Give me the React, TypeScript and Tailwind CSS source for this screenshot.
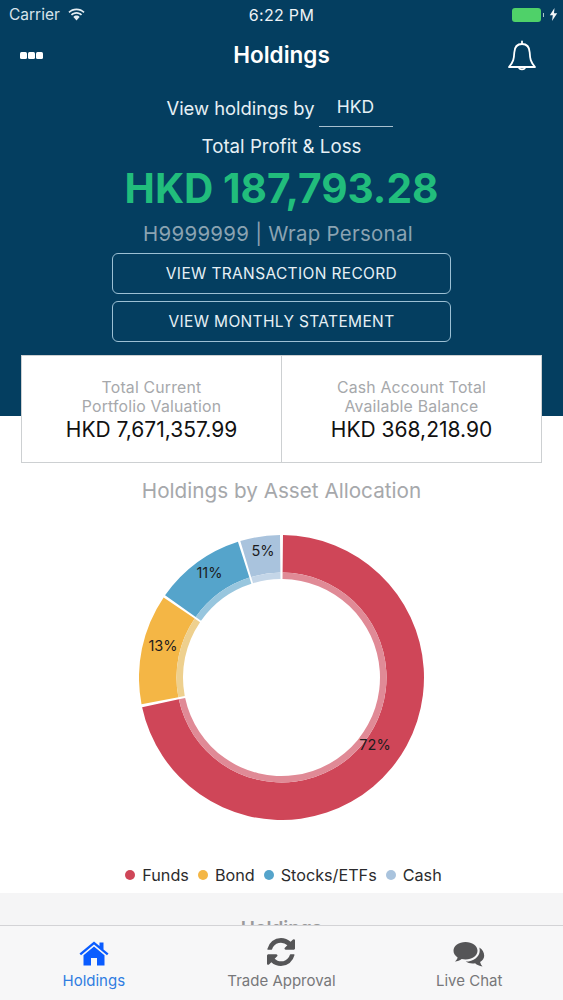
import React from "react";

const C = 281.5, CY = 677.5;
function pt(r: number, a: number): string {
  const t = (a * Math.PI) / 180;
  return `${(C - 139 + r * Math.sin(t)).toFixed(2)} ${(CY - 535 - r * Math.cos(t)).toFixed(2)}`;
}
function arc(r0: number, r1: number, a0: number, a1: number): string {
  const large = a1 - a0 > 180 ? 1 : 0;
  return `M${pt(r1, a0)}A${r1} ${r1} 0 ${large} 1 ${pt(r1, a1)}L${pt(r0, a1)}A${r0} ${r0} 0 ${large} 0 ${pt(r0, a0)}Z`;
}
const segs = [
  { a0: 0.6, a1: 258, main: "#cf4658", soft: "#e08a96" },
  { a0: 259.2, a1: 304.2, main: "#f4b645", soft: "#eed08e" },
  { a0: 305.2, a1: 342.2, main: "#55a4cb", soft: "#98c6de" },
  { a0: 343.2, a1: 359.4, main: "#a9c3dd", soft: "#c4d6e8" },
];

function Donut() {
  return (
    <svg width="285" height="285" viewBox="0 0 285 285" className="block">
      {segs.map((s) => (
        <g key={s.main}>
          <path d={arc(105, 142.5, s.a0, s.a1)} fill={s.main} />
          <path d={arc(98.5, 105, s.a0, s.a1)} fill={s.soft} />
        </g>
      ))}
      <g fontSize="14.5" fill="#1c1c1e" textAnchor="middle" fontFamily="Inter, sans-serif">
        <text x="236" y="215">72%</text>
        <text x="24" y="116">13%</text>
        <text x="70.500" y="42.500">11%</text>
        <text x="124" y="21">5%</text>
      </g>
    </svg>
  );
}

function Legend({ color, label }: { color: string; label: string }) {
  return (
    <div className="flex items-center gap-[7px]">
      <span className="w-[10px] h-[10px] rounded-full" style={{ backgroundColor: color }} />
      <span>{label}</span>
    </div>
  );
}

function Stat({ l1, l2, v }: { l1: string; l2: string; v: string }) {
  return (
    <div className="flex-1 flex flex-col items-center pt-[22px]">
      <div className="text-[15.800px] leading-[19px] text-[#a6a8ab] tracking-[0.2px]">{l1}</div>
      <div className="text-[15.800px] leading-[19px] text-[#a6a8ab] tracking-[0.2px]">{l2}</div>
      <div className="text-[21px] leading-[25px] text-[#111] mt-[1px]">{v}</div>
    </div>
  );
}

function Btn({ children }: { children: string }) {
  return (
    <div className="w-[339px] h-[41px] pt-[1px] rounded-[6px] border border-[#9cc0d4] flex items-center justify-center text-[15.5px] text-[#e6f0f5] tracking-[0.35px]">
      {children}
    </div>
  );
}

export default function App() {
  return (
    <div className="w-[563px] h-[1000px] overflow-hidden bg-white flex flex-col font-['Inter','Liberation_Sans',sans-serif]">
      <div className="h-[416px] shrink-0 bg-[#043e60] flex flex-col items-center text-white">
        <div className="w-full h-[29px] flex items-center justify-between pl-[9px] pr-[5px] relative">
          <div className="flex items-center gap-[8px] text-[15.500px] text-[#d7e3ea]">
            <span>Carrier</span>
            <svg width="17" height="13" viewBox="0 0 17 13" fill="#e4edf2">
              <path d="M8.5 0.500C5.300 0.500 2.500 1.700 0.400 3.800L1.600 5C3.400 3.200 5.800 2.200 8.500 2.200S13.600 3.200 15.400 5L16.600 3.800C14.500 1.700 11.700 0.500 8.500 0.500Z" />
              <path d="M8.500 4.100C6.300 4.100 4.400 5 2.900 6.400L4.100 7.600C5.300 6.500 6.800 5.800 8.500 5.800S11.700 6.500 12.900 7.600L14.100 6.400C12.600 5 10.700 4.100 8.500 4.100Z" />
              <path d="M8.500 7.600C7.300 7.600 6.200 8.100 5.400 8.900L8.500 12.400L11.600 8.900C10.800 8.100 9.700 7.600 8.500 7.600Z" />
            </svg>
          </div>
          <div className="absolute left-0 right-0 text-center text-[16px] text-[#eef3f6] tracking-[0.3px]">6:22 PM</div>
          <div className="flex items-center gap-[2px]">
            <div className="w-[29px] h-[14px] rounded-[3px] bg-[#4fd169]" />
            <div className="w-[1px] h-[4px] bg-[#a9c4c9]" />
            <svg width="9" height="13" viewBox="0 0 9 13" fill="#f2f6f8" className="ml-[3px]">
              <path d="M5.500 0L0.800 7.300H3.800L3 13L8.200 5.300H5L5.500 0Z" />
            </svg>
          </div>
        </div>
        <div className="w-full h-[52px] flex items-center justify-between pl-[20px] pr-[26px] relative">
          <div className="flex gap-[1px]">
            <span className="w-[7px] h-[7px] rounded-[1.500px] bg-white" />
            <span className="w-[7px] h-[7px] rounded-[1.500px] bg-white" />
            <span className="w-[7px] h-[7px] rounded-[1.500px] bg-white" />
          </div>
          <div className="absolute left-0 right-0 text-center text-[22.500px] font-semibold">Holdings</div>
          <svg width="30" height="32" viewBox="0 0 30 32" fill="none" stroke="#fff" strokeWidth="1.800" strokeLinejoin="round" strokeLinecap="round" className="mt-[2px]">
            <path d="M15 4C9.500 4 7.500 8.300 7.300 12.500C7 18.500 6.500 22 2 27H28C23.500 22 23 18.500 22.700 12.500C22.500 8.300 20.500 4 15 4Z" />
            <path d="M15 1.500V4" />
            <path d="M12 27.500C12.300 30 17.700 30 18 27.500" />
          </svg>
        </div>
        <div className="mt-[8px] flex items-start h-[47px] pr-[4px]">
          <div className="text-[18.400px] leading-[38px] text-[#e6f0f5]">View holdings by</div>
          <div className="ml-[4px] w-[74px] h-[38px] border-b border-[#a9c0cf] flex items-center justify-center text-[17.500px] text-[#e6f0f5]">HKD</div>
        </div>
        <div className="mt-[1px] h-[20px] leading-[20px] text-[18.700px] text-[#e6f0f5]">Total Profit &amp; Loss</div>
        <div className="mt-[9px] h-[46px] leading-[46px] text-[40.600px] font-bold text-[#21bd7c]">HKD 187,793.28</div>
        <div className="mt-[10px] h-[24px] leading-[24px] text-[20.400px] text-[#8ba3b2] tracking-[0.3px] pr-[7px]">H9999999 | Wrap Personal</div>
        <div className="mt-[7px] flex flex-col gap-[7px]">
          <Btn>VIEW TRANSACTION RECORD</Btn>
          <Btn>VIEW MONTHLY STATEMENT</Btn>
        </div>
      </div>

      <div className="-mt-[61px] mx-[21px] h-[108px] shrink-0 bg-white border border-[#cdd0d2] flex">
        <Stat l1="Total Current" l2="Portfolio Valuation" v="HKD 7,671,357.99" />
        <div className="w-[1px] bg-[#cdd0d2]" />
        <Stat l1="Cash Account Total" l2="Available Balance" v="HKD 368,218.90" />
      </div>

      <div className="mt-[15px] h-[26px] leading-[26px] text-center text-[20.700px] text-[#a6a8ab]">Holdings by Asset Allocation</div>

      <div className="mt-[31px] flex justify-center"><Donut /></div>

      <div className="mt-[43px] h-[24px] pl-[4px] flex justify-center items-center gap-[9px] text-[16.200px] text-[#2b2b2d]">
        <Legend color="#cf4658" label="Funds" />
        <Legend color="#f4b645" label="Bond" />
        <Legend color="#55a4cb" label="Stocks/ETFs" />
        <Legend color="#a9c3dd" label="Cash" />
      </div>

      <div className="mt-[6px] h-[32px] shrink-0 overflow-hidden bg-[#f5f5f6] text-center">
        <div className="pt-[22px] text-[19px] font-semibold text-[#9a9a9c]">Holdings</div>
      </div>

      <div className="h-[75px] shrink-0 bg-[#f7f7f8] border-t border-[#d3d3d6] grid grid-cols-3 text-[15px] text-center">
        <div className="flex flex-col items-center pt-[14px] text-[#2f7de1]">
          <svg width="30" height="26" viewBox="0 0 30 26" fill="#0a5cff">
            <path d="M15 1.500L0.500 13.500L2 15.300L15 4.600L28 15.300L29.500 13.500L24.500 9.400V2.500H20.500V6.100L15 1.500Z" />
            <path d="M15 6.500L4.500 15.200V25.500H12V18H18V25.500H25.500V15.200L15 6.500Z" />
          </svg>
          <div className="mt-[5px] leading-[20px]">Holdings</div>
        </div>
        <div className="flex flex-col items-center pt-[12px] text-[#77777a]">
          <svg width="28" height="28" viewBox="0 0 1536 1536" fill="#555557">
            <path d="M1511 928q0 5-1 7-64 268-268 434.500t-478 166.500q-146 0-282.500-55t-243.500-157l-129 129q-19 19-45 19t-45-19-19-45v-448q0-26 19-45t45-19h448q26 0 45 19t19 45-19 45l-137 137q71 66 161 102t187 36q134 0 250-65t186-179q11-17 53-117 8-23 30-23h192q13 0 22.500 9.500t9.500 22.500zm25-800v448q0 26-19 45t-45 19h-448q-26 0-45-19t-19-45 19-45l138-138q-148-137-349-137-134 0-250 65t-186 179q-11 17-53 117-8 23-30 23h-199q-13 0-22.500-9.500t-9.500-22.500v-7q65-268 270-434.500t480-166.500q146 0 284 55.500t245 156.500l130-129q19-19 45-19t45 19 19 45z" />
          </svg>
          <div className="mt-[5px] leading-[20px]">Trade Approval</div>
        </div>
        <div className="flex flex-col items-center pt-[15px] text-[#77777a]">
          <svg width="32" height="28" viewBox="0 0 32 28" fill="#555557">
            <path d="M12.500 1C5.800 1 0.500 4.800 0.500 9.800C0.500 12.500 2.100 14.900 4.600 16.500C4.200 18.100 3.200 19.400 1.800 20.500C4.500 20.300 6.900 19.400 8.700 18C9.900 18.300 11.200 18.500 12.500 18.500C19.200 18.500 24.500 14.700 24.500 9.800C24.500 4.800 19.200 1 12.500 1Z" />
            <path d="M26.300 6.500C26.600 7.500 26.700 8.600 26.700 9.700C26.700 15.800 20.500 20.500 12.700 20.600C14.500 21.800 16.900 22.500 19.500 22.500C20.400 22.500 21.300 22.400 22.100 22.200C24 23.900 26.400 25 29.500 25.500C28.300 24.200 27.500 22.700 27.100 20.900C29.700 19.400 31.200 17.200 31.200 14.700C31.200 11.300 29.300 8.300 26.300 6.500Z" />
          </svg>
          <div className="mt-[2px] leading-[20px]">Live Chat</div>
        </div>
      </div>
    </div>
  );
}
